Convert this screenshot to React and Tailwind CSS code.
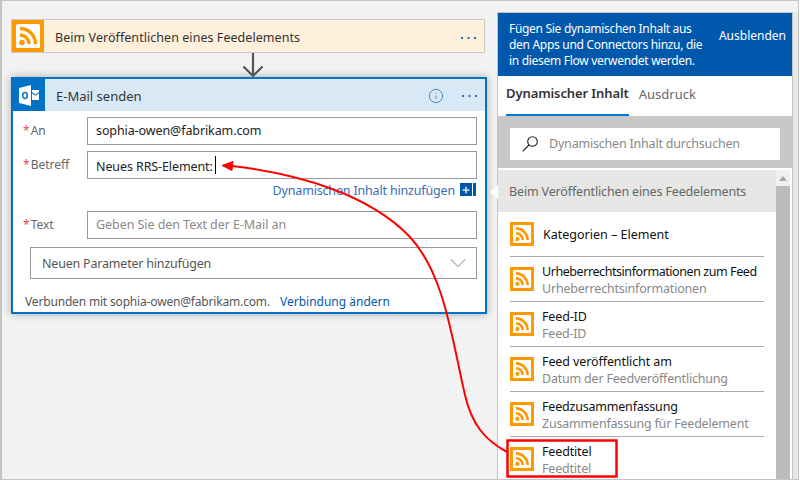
import { ChevronDown, Info, Plus } from 'lucide-react';

const feedItems = [
    { title: 'Urheberrechtsinformationen zum Feed', sub: 'Urheberrechtsinformationen', titleClass: 'tracking-[-0.43px]' },
    { title: 'Feed-ID', sub: 'Feed-ID', titleClass: 'tracking-[-0.15px]' },
    { title: 'Feed veröffentlicht am', sub: 'Datum der Feedveröffentlichung', titleClass: 'tracking-[-0.1px]' },
    { title: 'Feedzusammenfassung', sub: 'Zusammenfassung für Feedelement', titleClass: 'tracking-[-0.2px]' },
    { title: 'Feedtitel', sub: 'Feedtitel', titleClass: 'tracking-[-0.15px]' },
];

function RssIcon({ className }) {
    return (
        <svg className={className} viewBox="0 0 32 32">
            <rect width="32" height="32" fill="#ff9900" />
            <rect x="4" y="4" width="24" height="24" rx="1.5" fill="#fff" />
            <circle cx="10" cy="22.500" r="2.800" fill="#ff9900" />
            <path d="M8 15a9 9 0 0 1 9 9" fill="none" stroke="#ff9900" strokeWidth="3.400" />
            <path d="M8 8.500a15.500 15.500 0 0 1 15.500 15.500" fill="none" stroke="#ff9900" strokeWidth="3.400" />
        </svg>
    );
}

function OutlookIcon() {
    return (
        <svg className="w-5 h-[21px]" viewBox="0 0 20 21">
            <path d="M0 3 12 0v21L0 18z" fill="#fff" />
            <ellipse cx="6" cy="10.500" rx="2.300" ry="3" fill="none" stroke="#0072c6" strokeWidth="1.500" />
            <path d="M13 5h7v2l-3.500 2.500L13 7z" fill="#fff" />
            <path d="M13 8.300l3.500 2.500L20 8.300V15h-7z" fill="#fff" />
        </svg>
    );
}

function Dots() {
    return (
        <svg className="block w-4 h-0.5 fill-[#2a6ebb]" viewBox="0 0 16 2">
            <rect width="2" height="2" />
            <rect x="6.500" width="2" height="2" />
            <rect x="13" width="2" height="2" />
        </svg>
    );
}

function Field({ label, children }) {
    return (
        <div className="flex h-7 items-start">
            <div className="w-[74px] pl-[10px] pt-px text-[12px] leading-[26px] text-[#666]">
                <span className="mr-px text-[#e0504a]">*</span>
                {label}
            </div>
            <div className="flex-1 h-7 border border-[#999] bg-white px-2 text-[12.5px] leading-[26px] tracking-[-0.1px] text-[#222]">{children}</div>
        </div>
    );
}

function FeedRow({ title, sub, titleClass }) {
    return (
        <div className="flex h-[45px] items-center gap-[8px] border-t border-[#ababab] mx-3">
            <RssIcon className="w-6 h-6 shrink-0" />
            <div className="pt-px leading-[17px] whitespace-nowrap">
                <div className={`text-[12.5px] text-[#111] ${titleClass}`}>{title}</div>
                <div className="text-[12.5px] tracking-[-0.2px] text-[#888]">{sub}</div>
            </div>
        </div>
    );
}

export default function App() {
    return (
        <div className="relative flex w-[799px] h-[480px] overflow-hidden bg-[#f2f2f2] border-t border-l-2 border-b border-r border-[#c4c4c4] font-['Noto_Sans','Open_Sans',sans-serif]">
            {/* flow column */}
            <div className="w-[495px] shrink-0 pl-[9px] pt-[18px]">
                <div className="flex h-[34px] w-[474px] items-center border border-[#c8c8c8] bg-[#fef0da]">
                    <div className="flex h-8 w-8 items-center justify-center">
                        <RssIcon className="w-8 h-8" />
                    </div>
                    <span className="ml-[11px] flex-1 pt-[4px] text-[12.5px] tracking-[0.05px] text-[#333]">Beim Veröffentlichen eines Feedelements</span>
                    <div className="mr-[7px] mt-[3px]">
                        <Dots />
                    </div>
                </div>

                <svg className="ml-[228px] block w-7 h-6" viewBox="0 0 28 24">
                    <path d="M14 0v23M4.500 13.500l9.500 9.500 9.500-9.500" fill="none" stroke="#555" strokeWidth="2.200" />
                </svg>

                <div className="w-[476px] h-[237px] border-2 border-[#0072c6] bg-white shadow-[0_0_8px_rgba(0,0,0,0.3)]">
                    <div className="flex h-8 items-center bg-[#d9e8f5]">
                        <div className="flex h-8 w-8 items-center justify-center bg-[#0072c6]">
                            <OutlookIcon />
                        </div>
                        <span className="ml-[11px] flex-1 pt-[3px] text-[13px] text-[#333]">E-Mail senden</span>
                        <Info className="mt-[2px] w-4 h-4 text-[#2a6ebb]" strokeWidth={1.2} />
                        <div className="ml-[18px] mr-[7px] mt-[2px]">
                            <Dots />
                        </div>
                    </div>
                    <div className="flex flex-col pr-2 pt-[6px]">
                        <Field label="An">sophia-owen@fabrikam.com</Field>
                        <div className="mt-[6px]">
                            <Field label="Betreff">
                                <span className="inline-block translate-y-px">Neues RRS-Element:</span>
                                <span className="ml-[2px] inline-block h-[18px] w-px translate-y-1 bg-black" />
                            </Field>
                        </div>
                        <div className="flex h-[32px] items-start justify-end pr-px pt-[4px]">
                            <span className="mt-px text-[12.5px] leading-[14px] tracking-[-0.17px] text-[#3a6cb4]">Dynamischen Inhalt hinzufügen</span>
                            <span className="ml-[5px] flex h-[13px] w-3 items-center justify-center bg-[#0058ad]">
                                <Plus className="w-2.5 h-2.5 text-white" strokeWidth={3} />
                            </span>
                            <span className="ml-px h-[13px] w-[3px] bg-[#0058ad]" />
                        </div>
                        <Field label="Text">
                            <span className="tracking-[-0.06px] text-[#888]">Geben Sie den Text der E-Mail an</span>
                        </Field>
                        <div className="ml-[17px] mt-2 flex h-8 items-center justify-between border border-[#999] pl-[11px] pr-[4px] text-[12.5px] tracking-[-0.2px] text-[#555]">
                            <span className="pt-[2px]">Neuen Parameter hinzufügen</span>
                            <ChevronDown className="w-7 h-7 text-[#999]" strokeWidth={0.9} />
                        </div>
                        <div className="ml-[12px] mt-[14px] text-[12px] tracking-[-0.17px] text-[#555]">
                            Verbunden mit sophia-owen@fabrikam.com.
                            <span className="ml-[10px] tracking-normal text-[#0058ad]">Verbindung ändern</span>
                        </div>
                    </div>
                </div>
            </div>

            {/* dynamic content panel */}
            <div className="relative flex h-[469px] w-[296px] shrink-0 flex-col mt-[11px] border-x border-t border-[#c4c4c4] bg-white">
                <div className="flex h-[63px] shrink-0 items-start bg-[#0058ad] pl-[11px] pr-[6px] pt-2 text-white">
                    <p className="w-[205px] text-[12px] leading-4 tracking-[-0.3px]">Fügen Sie dynamischen Inhalt aus den Apps und Connectors hinzu, die in diesem Flow verwendet werden.</p>
                    <span className="ml-auto mt-[7px] text-[12px] leading-4">Ausblenden</span>
                </div>
                <div className="flex h-10 shrink-0 pl-[8px]">
                    <div className="flex h-10 items-center border-b-2 border-[#0078d4] pb-[2px] text-[13px] font-semibold tracking-[-0.1px] text-[#333]">Dynamischer Inhalt</div>
                    <div className="ml-[10px] flex h-10 items-center pb-[3px] text-[13px] text-[#666]">Ausdruck</div>
                </div>
                <div className="flex h-[52px] shrink-0 items-start justify-center bg-[#c8c9c6] pt-3">
                    <div className="flex h-8 w-[270px] items-center gap-[11px] bg-white pl-3">
                        <svg className="w-4 h-4" viewBox="0 0 16 16" fill="none" stroke="#222" strokeWidth="1.100">
                            <circle cx="10.500" cy="5.500" r="4.800" />
                            <path d="M7 9 .7 15.300" />
                        </svg>
                        <span className="text-[12.5px] tracking-[-0.2px] text-[#888]">Dynamischen Inhalt durchsuchen</span>
                    </div>
                </div>
                <div className="flex min-h-0 flex-1 mt-[2px] pr-[2px]">
                    <div className="min-w-0 flex-1">
                        <div className="flex h-[42px] items-center bg-[#e6e7e5] pl-[11px] pt-[2px] text-[12.5px] tracking-[-0.15px] text-[#666]">Beim Veröffentlichen eines Feedelements</div>
                        <div className="flex h-[44px] items-center gap-[9px] mx-3">
                            <RssIcon className="w-6 h-6 shrink-0" />
                            <span className="pt-[2px] text-[12.5px] text-[#111]">Kategorien – Element</span>
                        </div>
                        {feedItems.map((item) => (
                            <FeedRow key={item.title} title={item.title} sub={item.sub} titleClass={item.titleClass} />
                        ))}
                    </div>
                    <div className="flex w-[14px] shrink-0 flex-col items-center bg-[#f0f0f0]">
                        <div className="mt-[6px] h-0 w-0 border-x-[4px] border-b-[5px] border-x-transparent border-b-[#a8a8a8]" />
                        <div className="mt-[5px] w-full flex-1 bg-[#bcbcbc]" />
                    </div>
                </div>
                <div className="absolute -left-[8px] top-[172px] h-0 w-0 border-y-[7px] border-r-[8px] border-y-transparent border-r-white" />
            </div>

            {/* page scrollbar track */}
            <div className="mt-[11px] flex-1 bg-[#e6e6e6]" />

            {/* annotation over the screenshot */}
            <svg className="absolute -left-[2px] -top-px w-[800px] h-[480px] max-w-none pointer-events-none" viewBox="0 0 800 480">
                <path d="M232 166C300 174 370 195 410 237C445 275 452 340 465 395C472 425 485 440 507 452" fill="none" stroke="#ff0000" strokeWidth="2" />
                <path d="M222 165.500L233 161.500 232 170.500z" fill="#ff0000" stroke="#ff0000" />
                <rect x="507.500" y="440.500" width="109" height="36" fill="none" stroke="#ff0000" strokeWidth="2.500" />
            </svg>
        </div>
    );
}
